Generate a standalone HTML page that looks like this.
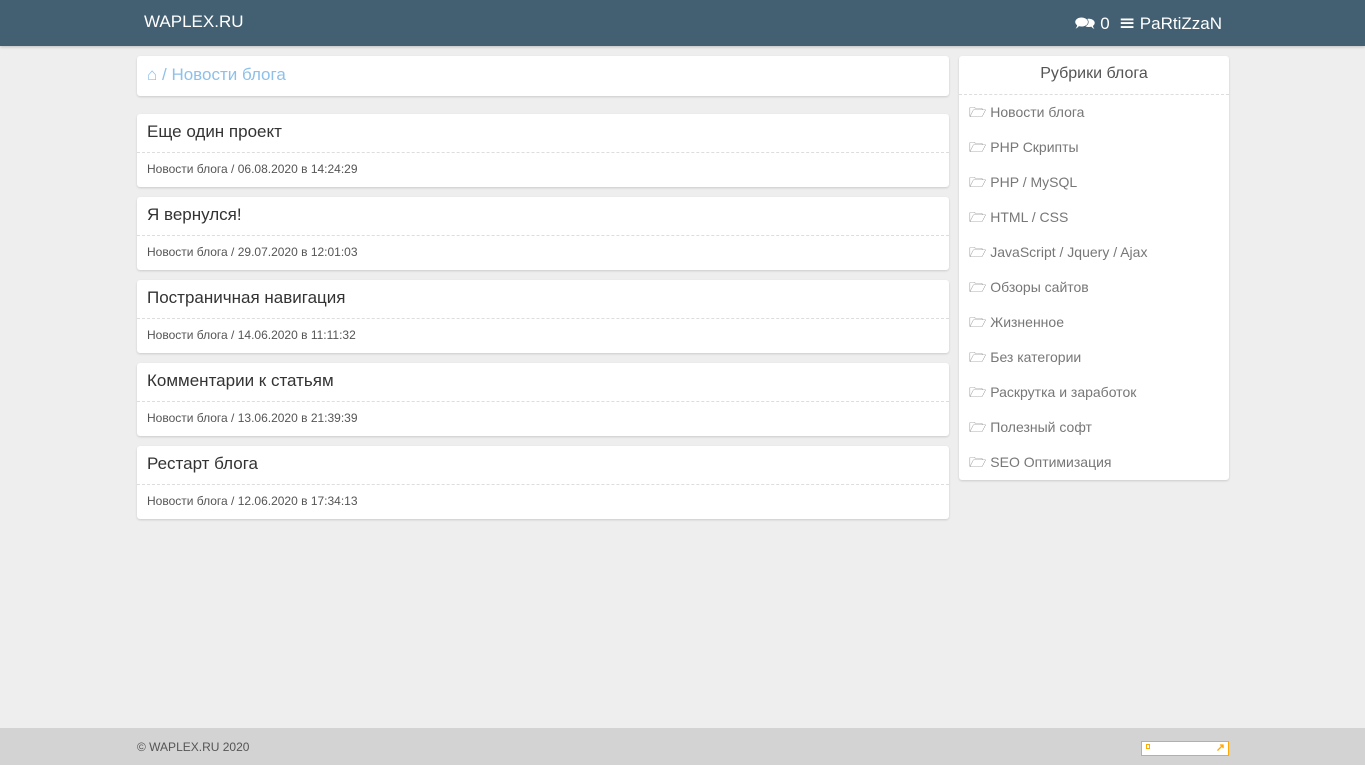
<!DOCTYPE html>
<html><head><meta charset="utf-8"><style>
*{box-sizing:border-box;margin:0;padding:0}
body{width:1365px;height:765px;background:#eee;font-family:"Liberation Sans",sans-serif;position:relative;overflow:hidden}
.hdr{position:absolute;left:0;top:0;width:1365px;height:46px;background:#435f72;box-shadow:0 1px 3px rgba(0,0,0,.2)}
.logo{position:absolute;left:144px;top:12px;color:#fff;font-size:17px}
.usr{position:absolute;right:143px;top:11px;color:#fff;font-size:17px}
.box{position:absolute;background:#fff;border-radius:3px;box-shadow:0 1px 2px rgba(0,0,0,.15)}
.bc{left:137px;top:56px;width:812px;height:40px;color:#8ec0ea;font-size:17px;padding:9px 10px}
.post{left:137px;width:812px;height:73px}
.post .t{height:39px;border-bottom:1px dashed #ddd;font-size:17px;color:#333;padding:8px 10px}
.post .m{font-size:12px;color:#555;padding:9px 10px}
.side{left:959px;top:56px;width:270px;height:424px}
.side h3{font-weight:normal;text-align:center;font-size:16px;color:#555;height:39px;padding-top:9px;border-bottom:1px dashed #ddd}
.side div{height:35px;padding:7px 10px;font-size:14px;color:#777}
.side div b{font-weight:normal;color:#666}
.ftr{position:absolute;left:0;top:728px;width:1365px;height:37px;background:#d3d3d3;font-size:12px;color:#555}
</style></head><body>
<div class="hdr"><div class="logo">WAPLEX.RU</div><div class="usr">🗪 0 &nbsp;☰ PaRtiZzaN</div></div>
<div class="box bc">⌂ / Новости блога</div>
<div class="box post" style="top:114px"><div class="t">Еще один проект</div><div class="m">Новости блога / 06.08.2020 в 14:24:29</div></div>
<div class="box post" style="top:197px"><div class="t">Я вернулся!</div><div class="m">Новости блога / 29.07.2020 в 12:01:03</div></div>
<div class="box post" style="top:280px"><div class="t">Постраничная навигация</div><div class="m">Новости блога / 14.06.2020 в 11:11:32</div></div>
<div class="box post" style="top:363px"><div class="t">Комментарии к статьям</div><div class="m">Новости блога / 13.06.2020 в 21:39:39</div></div>
<div class="box post" style="top:446px"><div class="t">Рестарт блога</div><div class="m">Новости блога / 12.06.2020 в 17:34:13</div></div>
<div class="box side"><h3>Рубрики блога</h3>
<div><b>🗁</b> Новости блога</div><div><b>🗁</b> PHP Скрипты</div><div><b>🗁</b> PHP / MySQL</div><div><b>🗁</b> HTML / CSS</div><div><b>🗁</b> JavaScript / Jquery / Ajax</div><div><b>🗁</b> Обзоры сайтов</div><div><b>🗁</b> Жизненное</div><div><b>🗁</b> Без категории</div><div><b>🗁</b> Раскрутка и заработок</div><div><b>🗁</b> Полезный софт</div><div><b>🗁</b> SEO Оптимизация</div></div>
<div class="ftr"><span style="position:absolute;left:137px;top:12px">© WAPLEX.RU 2020</span>
<div style="position:absolute;left:1141px;top:13px;width:88px;height:15px;border:1px solid #fa0;background:#fff"><span style="position:absolute;left:4px;top:2px;width:4px;height:5px;border:1px solid #fa0"></span><span style="position:absolute;right:3px;top:1px;color:#fa0;font-size:11px;line-height:11px;font-weight:bold">↗</span></div></div>
</body></html>
